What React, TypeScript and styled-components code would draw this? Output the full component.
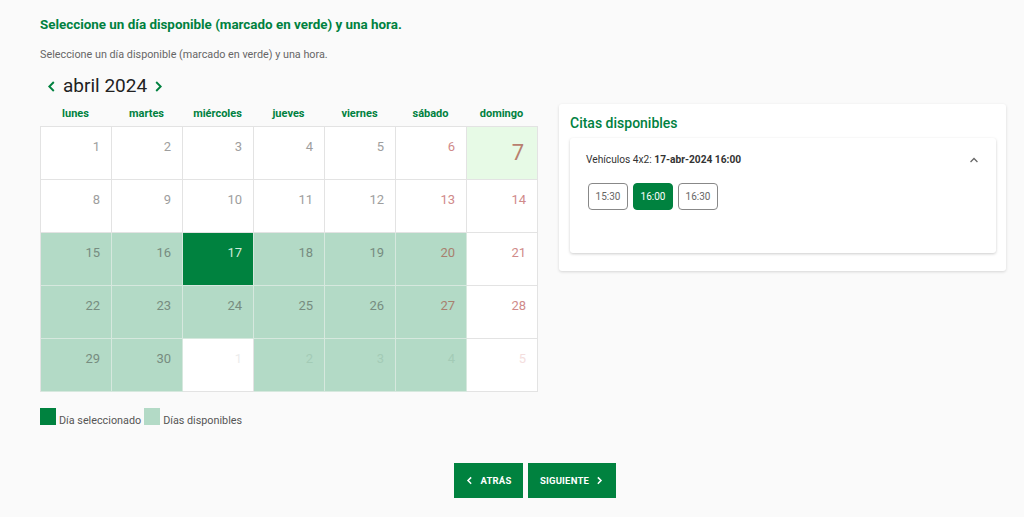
import React from "react";
import styled, { createGlobalStyle } from "styled-components";

const GREEN = "#00813f";
const AVAIL = "#b3dac6";

const Global = createGlobalStyle`
  html, body { margin: 0; padding: 0; background: #fafafa; }
  body { font-family: Roboto, "Noto Sans", Arial, sans-serif; color: #333; }
  * { box-sizing: border-box; }
`;

const Page = styled.div`
  padding: 15px 0 0 40px;
  width: 1024px;
  height: 517px;
  overflow: hidden;
`;

const Title = styled.h1`
  margin: 0;
  font-size: 13.4px;
  line-height: 20px;
  font-weight: 700;
  color: ${GREEN};
`;

const Subtitle = styled.p`
  margin: 12px 0 0;
  font-size: 10.8px;
  line-height: 16px;
  color: #666;
`;

const Columns = styled.div`
  display: flex;
  align-items: flex-start;
  gap: 21px;
  margin-top: 10px;
`;

const LeftCol = styled.div`
  width: 498px;
  display: flex;
  flex-direction: column;
`;

const MonthHeader = styled.div`
  display: flex;
  align-items: center;
  height: 26px;
  gap: 5px;
  padding-left: 5px;
`;

const MonthLabel = styled.span`
  font-size: 19px;
  color: #222;
  line-height: 26px;
`;

const NavBtn = styled.span<{ $muted?: boolean }>`
  display: inline-flex;
  align-items: center;
  color: ${(p) => (p.$muted ? "#666" : GREEN)};
`;

const WeekRow = styled.div`
  display: grid;
  grid-template-columns: repeat(7, 71px);
  margin-top: 7px;
  height: 16px;
`;

const WeekDay = styled.div`
  text-align: center;
  font-size: 11px;
  font-weight: 700;
  line-height: 16px;
  color: ${GREEN};
`;

const Grid = styled.div`
  margin-top: 4px;
  display: grid;
  grid-template-columns: repeat(7, 71px);
  grid-auto-rows: 53px;
  border-left: 1px solid #e3e3e3;
  border-top: 1px solid #e3e3e3;
  width: 498px;
  background: #fff;
`;

type Kind = "white" | "avail" | "selected" | "today";

const bgFor = (k: Kind) =>
  k === "avail" ? AVAIL : k === "selected" ? "#00823f" : k === "today" ? "#e7fae6" : "#fff";
const borderFor = (k: Kind) => (k === "avail" || k === "selected" ? "#d6e8de" : "#e3e3e3");

const Cell = styled.div<{ $kind: Kind; $color: string; $big?: boolean }>`
  background: ${(p) => bgFor(p.$kind)};
  border-right: 1px solid ${(p) => borderFor(p.$kind)};
  border-bottom: 1px solid ${(p) => borderFor(p.$kind)};
  color: ${(p) => p.$color};
  font-size: ${(p) => (p.$big ? "22px" : "13px")};
  text-align: right;
  padding: ${(p) => (p.$big ? "13px 13px 0 0" : "10px 11px 0 0")};
  line-height: ${(p) => (p.$big ? "26px" : "20px")};
`;

const Legend = styled.div`
  display: flex;
  align-items: flex-end;
  margin-top: 16px;
  font-size: 10.8px;
  color: #555;
`;

const Swatch = styled.span<{ $c: string }>`
  display: inline-block;
  width: 16px;
  height: 17px;
  background: ${(p) => p.$c};
  margin-right: 3px;
`;

const LegendText = styled.span`
  line-height: 13px;
  margin-right: 3px;
  margin-bottom: -2px;
`;

const RightCard = styled.div`
  margin-top: 31px;
  width: 447px;
  background: #fff;
  border-radius: 3px;
  box-shadow: 0 1px 3px rgba(0, 0, 0, 0.15);
  padding: 10px 10px 18px 11px;
`;

const CardTitle = styled.h2`
  margin: 0;
  font-size: 14px;
  font-weight: 500;
  color: ${GREEN};
  line-height: 18px;
`;

const Inner = styled.div`
  margin-top: 6px;
  height: 115px;
  background: #fff;
  border-radius: 3px;
  box-shadow: 0 1px 3px rgba(0, 0, 0, 0.2);
  padding: 14px 16px 0 16px;
`;

const InnerHead = styled.div`
  display: flex;
  justify-content: space-between;
  align-items: center;
  font-size: 10.2px;
  color: #333;
  line-height: 16px;
`;

const Times = styled.div`
  display: flex;
  gap: 5px;
  margin-top: 15px;
  padding-left: 2px;
`;

const TimeBtn = styled.button<{ $active?: boolean }>`
  width: 40px;
  height: 27px;
  border-radius: 4px;
  border: 1px solid ${(p) => (p.$active ? GREEN : "#888")};
  background: ${(p) => (p.$active ? "#00823f" : "#fff")};
  color: ${(p) => (p.$active ? "#fff" : "#666")};
  font-family: Roboto, sans-serif;
  font-size: 10px;
  padding: 0;
`;

const Footer = styled.div`
  display: flex;
  justify-content: center;
  gap: 5px;
  margin-top: 38px;
  padding-left: 46px;
  margin-left: -40px;
`;

const ActionBtn = styled.button<{ $w: number }>`
  width: ${(p) => p.$w}px;
  height: 35px;
  background: #00823f;
  color: #fff;
  border: none;
  font-family: Roboto, sans-serif;
  font-size: 9.5px;
  font-weight: 700;
  letter-spacing: 0.2px;
  display: inline-flex;
  align-items: center;
  justify-content: center;
  gap: 6px;
  padding: 0;
`;

const Chevron = ({ dir, size = 12, sw = 3 }: { dir: "l" | "r" | "u"; size?: number; sw?: number }) => (
  <svg width={size} height={size} viewBox="0 0 24 24" fill="none" stroke="currentColor" strokeWidth={sw} strokeLinecap="square">
    {dir === "l" && <path d="M15 5l-7 7 7 7" />}
    {dir === "r" && <path d="M9 5l7 7-7 7" />}
    {dir === "u" && <path d="M6 15l6-6 6 6" />}
  </svg>
);

type Day = { n: number; kind: Kind; color: string; big?: boolean };

const W = "#9e9e9e";
const WE = "#d08a8a";
const AV = "#778c80";
const AVWE = "#a8806f";

const days: Day[] = [
  { n: 1, kind: "white", color: W },
  { n: 2, kind: "white", color: W },
  { n: 3, kind: "white", color: W },
  { n: 4, kind: "white", color: W },
  { n: 5, kind: "white", color: W },
  { n: 6, kind: "white", color: WE },
  { n: 7, kind: "today", color: "#b8806f", big: true },
  { n: 8, kind: "white", color: W },
  { n: 9, kind: "white", color: W },
  { n: 10, kind: "white", color: W },
  { n: 11, kind: "white", color: W },
  { n: 12, kind: "white", color: W },
  { n: 13, kind: "white", color: WE },
  { n: 14, kind: "white", color: WE },
  { n: 15, kind: "avail", color: AV },
  { n: 16, kind: "avail", color: AV },
  { n: 17, kind: "selected", color: "#cfe9da" },
  { n: 18, kind: "avail", color: AV },
  { n: 19, kind: "avail", color: AV },
  { n: 20, kind: "avail", color: AVWE },
  { n: 21, kind: "white", color: WE },
  { n: 22, kind: "avail", color: AV },
  { n: 23, kind: "avail", color: AV },
  { n: 24, kind: "avail", color: AV },
  { n: 25, kind: "avail", color: AV },
  { n: 26, kind: "avail", color: AV },
  { n: 27, kind: "avail", color: AVWE },
  { n: 28, kind: "white", color: WE },
  { n: 29, kind: "avail", color: AV },
  { n: 30, kind: "avail", color: AV },
  { n: 1, kind: "white", color: "#ececec" },
  { n: 2, kind: "avail", color: "#a3cbb6" },
  { n: 3, kind: "avail", color: "#a3cbb6" },
  { n: 4, kind: "avail", color: "#a3cbb6" },
  { n: 5, kind: "white", color: "#f4dede" },
];

const weekdays = ["lunes", "martes", "miércoles", "jueves", "viernes", "sábado", "domingo"];

export default function App() {
  return (
    <>
      <Global />
      <Page>
        <Title>Seleccione un día disponible (marcado en verde) y una hora.</Title>
        <Subtitle>Seleccione un día disponible (marcado en verde) y una hora.</Subtitle>
        <Columns>
          <LeftCol>
            <MonthHeader>
              <NavBtn><Chevron dir="l" size={13} sw={3.5} /></NavBtn>
              <MonthLabel>abril 2024</MonthLabel>
              <NavBtn><Chevron dir="r" size={13} sw={3.5} /></NavBtn>
            </MonthHeader>
            <WeekRow>
              {weekdays.map((d) => (
                <WeekDay key={d}>{d}</WeekDay>
              ))}
            </WeekRow>
            <Grid>
              {days.map((d, i) => (
                <Cell key={i} $kind={d.kind} $color={d.color} $big={d.big}>
                  {d.n}
                </Cell>
              ))}
            </Grid>
            <Legend>
              <Swatch $c="#00823f" />
              <LegendText>Día seleccionado</LegendText>
              <Swatch $c={AVAIL} />
              <LegendText>Días disponibles</LegendText>
            </Legend>
          </LeftCol>
          <RightCard>
            <CardTitle>Citas disponibles</CardTitle>
            <Inner>
              <InnerHead>
                <span>
                  Vehículos 4x2: <b>17-abr-2024 16:00</b>
                </span>
                <NavBtn $muted><Chevron dir="u" size={12} sw={2.5} /></NavBtn>
              </InnerHead>
              <Times>
                <TimeBtn>15:30</TimeBtn>
                <TimeBtn $active>16:00</TimeBtn>
                <TimeBtn>16:30</TimeBtn>
              </Times>
            </Inner>
          </RightCard>
        </Columns>
        <Footer>
          <ActionBtn $w={69}>
            <Chevron dir="l" size={9} sw={4} />
            ATRÁS
          </ActionBtn>
          <ActionBtn $w={88}>
            SIGUIENTE
            <Chevron dir="r" size={9} sw={4} />
          </ActionBtn>
        </Footer>
      </Page>
    </>
  );
}
